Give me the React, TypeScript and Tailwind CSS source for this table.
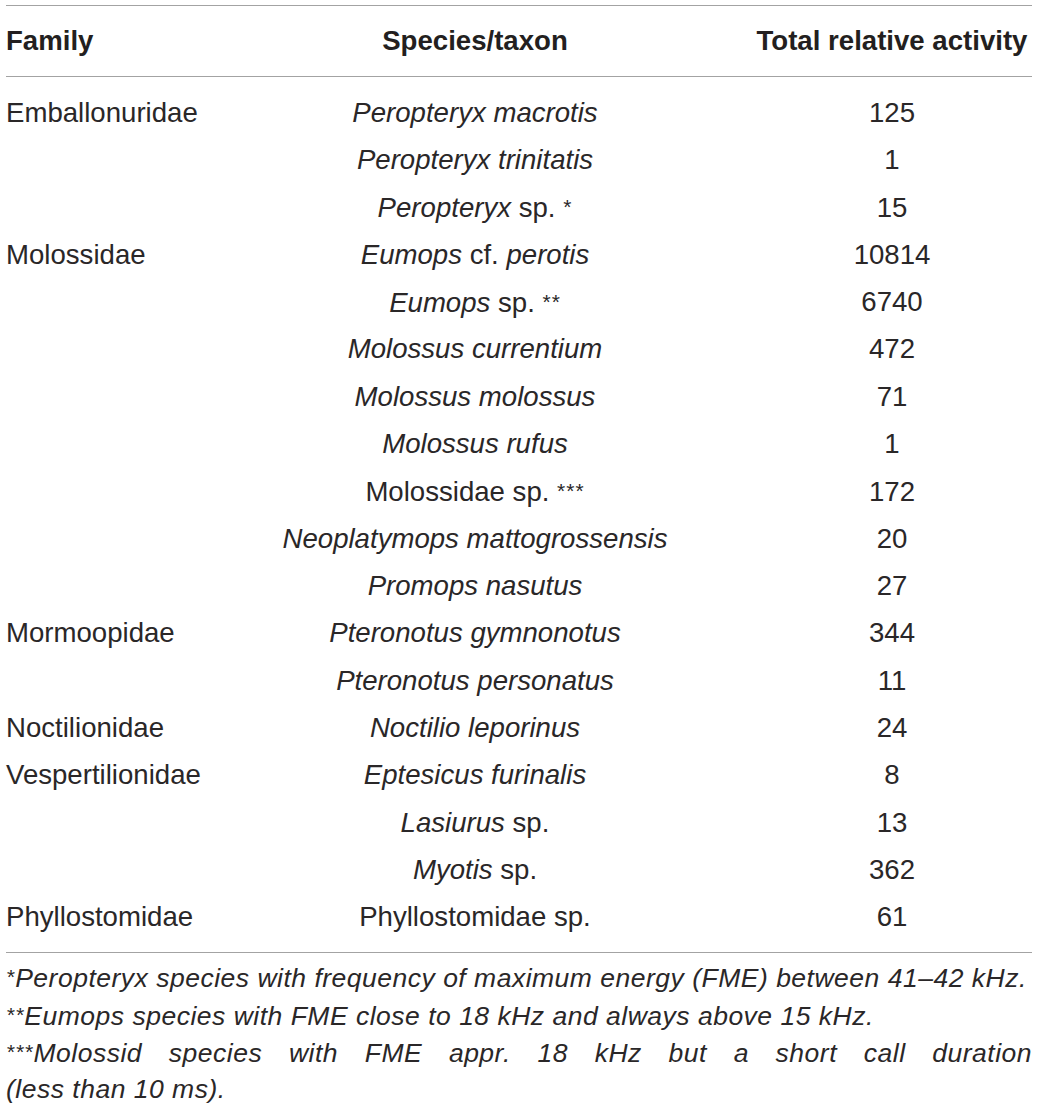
import React from 'react';

type Row = { family?: string; taxon: React.ReactNode; total: string };

// small raised asterisks like the Helvetica glyph in the reference
const Ast = ({ n }: { n: number }) => (
  <span className="text-[21px] align-[3px] tracking-[1px]">{'*'.repeat(n)}</span>
);

const rows: Row[] = [
  { family: 'Emballonuridae', taxon: <i>Peropteryx macrotis</i>, total: '125' },
  { taxon: <i>Peropteryx trinitatis</i>, total: '1' },
  { taxon: <><i>Peropteryx</i> sp. <Ast n={1} /></>, total: '15' },
  { family: 'Molossidae', taxon: <><i>Eumops</i> cf. <i>perotis</i></>, total: '10814' },
  { taxon: <><i>Eumops</i> sp. <Ast n={2} /></>, total: '6740' },
  { taxon: <i>Molossus currentium</i>, total: '472' },
  { taxon: <i>Molossus molossus</i>, total: '71' },
  { taxon: <i>Molossus rufus</i>, total: '1' },
  { taxon: <>Molossidae sp. <Ast n={3} /></>, total: '172' },
  { taxon: <i>Neoplatymops mattogrossensis</i>, total: '20' },
  { taxon: <i>Promops nasutus</i>, total: '27' },
  { family: 'Mormoopidae', taxon: <i>Pteronotus gymnonotus</i>, total: '344' },
  { taxon: <i>Pteronotus personatus</i>, total: '11' },
  { family: 'Noctilionidae', taxon: <i>Noctilio leporinus</i>, total: '24' },
  { family: 'Vespertilionidae', taxon: <i>Eptesicus furinalis</i>, total: '8' },
  { taxon: <><i>Lasiurus</i> sp.</>, total: '13' },
  { taxon: <><i>Myotis</i> sp.</>, total: '362' },
  { family: 'Phyllostomidae', taxon: 'Phyllostomidae sp.', total: '61' },
];

export default function App() {
  return (
    <div className="min-h-screen bg-white text-[#2a2728] font-['Liberation_Sans',Arial,sans-serif] pt-[5px] px-[6px]">
      <div className="w-[1026px]">
        <div className="h-px bg-[#a3a3a3]" />

        {/* Header */}
        <div className="grid grid-cols-[192px_554px_280px] h-[70px] items-center text-[27.6px] font-bold leading-[70px] text-[#231f20]">
          <div className="whitespace-nowrap">Family</div>
          <div className="text-center whitespace-nowrap">Species/taxon</div>
          <div className="text-center whitespace-nowrap">Total relative activity</div>
        </div>
        <div className="h-px bg-[#a3a3a3]" />

        {/* Body */}
        <div className="pt-[11.5px] pb-[11px]">
          {rows.map((r, i) => (
            <div
              key={i}
              className="grid grid-cols-[192px_554px_280px] h-[47.35px] items-center text-[27.6px] leading-[47.35px]"
            >
              <div className="whitespace-nowrap">{r.family ?? ''}</div>
              <div className="text-center whitespace-nowrap">{r.taxon}</div>
              <div className="text-center whitespace-nowrap">{r.total}</div>
            </div>
          ))}
        </div>
        <div className="h-px bg-[#a3a3a3]" />

        {/* Footnotes */}
        <div className="pt-[6.7px] italic text-[26.5px] leading-[36.3px] tracking-[0.5px]">
          <p className="whitespace-nowrap">
            <Ast n={1} />Peropteryx species with frequency of maximum energy (FME) between 41–42 kHz.
          </p>
          <p className="whitespace-nowrap">
            <Ast n={2} />Eumops species with FME close to 18 kHz and always above 15 kHz.
          </p>
          <p className="text-justify">
            <Ast n={3} />Molossid species with FME appr. 18 kHz but a short call duration{' '}
            {'(less\u00a0than\u00a010\u00a0ms).'}
          </p>
        </div>
      </div>
    </div>
  );
}
